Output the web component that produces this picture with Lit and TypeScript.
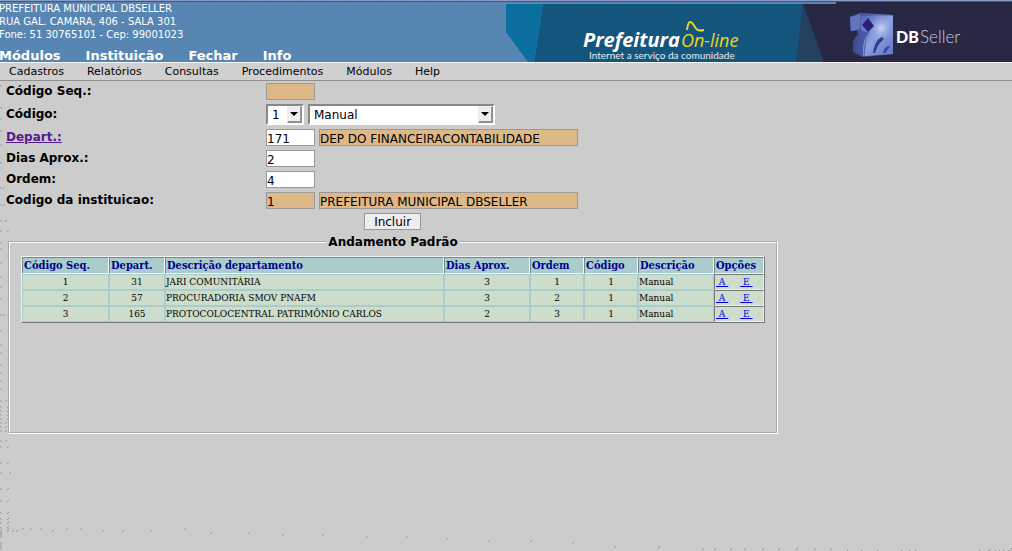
import { LitElement, html, css, svg } from "lit";
import { customElement, state } from "lit/decorators.js";

interface Step {
  seq: number;
  dept: number;
  name: string;
  days: number;
  order: number;
  code: number;
  desc: string;
}

const STEPS: Step[] = [
  { seq: 1, dept: 31, name: "JARI COMUNITÁRIA", days: 3, order: 1, code: 1, desc: "Manual" },
  { seq: 2, dept: 57, name: "PROCURADORIA SMOV PNAFM", days: 3, order: 2, code: 1, desc: "Manual" },
  { seq: 3, dept: 165, name: "PROTOCOLOCENTRAL PATRIMÔNIO CARLOS", days: 2, order: 3, code: 1, desc: "Manual" },
];

@customElement("city-header")
class CityHeader extends LitElement {
  static styles = css`
    :host {
      display: block;
      font-family: "DejaVu Sans", sans-serif;
    }
    .strip {
      height: 1px;
      background: repeating-linear-gradient(90deg, #8d9dcb 0 26px, #8d8d8d 26px 27px);
      border-bottom: 1px solid #47508a;
    }
    .top {
      display: flex;
      height: 60px;
      background: #5786b2;
      color: #fff;
      overflow: hidden;
    }
    .left {
      flex: 1;
      display: flex;
      flex-direction: column;
      justify-content: space-between;
      white-space: nowrap;
    }
    address {
      font-style: normal;
      font-size: 10px;
      line-height: 13px;
      margin-left: -1px;
    }
    .mods {
      display: flex;
      gap: 25px;
      margin-left: -1px;
      font-size: 13px;
      font-weight: bold;
      line-height: 13px;
    }
    a {
      color: inherit;
      text-decoration: none;
    }
    .banner {
      flex: none;
      width: 506px;
      height: 60px;
    }
    .menu {
      display: flex;
      gap: 23px;
      padding: 0 9px;
      border-top: 1px solid #f6f6f6;
      border-bottom: 1px solid #8f8f8f;
      background: #d0d0d0;
      color: #000;
      font-size: 11px;
      line-height: 17px;
    }
    .pf {
      font: italic bold 20px "Open Sans", sans-serif;
      fill: #fff;
    }
    .ol {
      font: italic 18px "Open Sans", sans-serif;
      fill: #ecd51c;
    }
    .tag {
      font: 10px Lato, sans-serif;
      fill: #e6eef4;
    }
    .db {
      font: 900 16px Lato, sans-serif;
      fill: #fff;
    }
    .seller {
      font: 300 17px Lato, sans-serif;
      fill: #c9cbdc;
    }
  `;

  render() {
    return html`
      <header>
        <div class="strip"></div>
        <div class="top">
          <div class="left">
            <address>
              PREFEITURA MUNICIPAL DBSELLER<br />RUA GAL. CAMARA, 406 - SALA 301<br />Fone: 51
              30765101 - Cep: 99001023
            </address>
            <nav class="mods">
              ${["Módulos", "Instituição", "Fechar", "Info"].map((t) => html`<a href="#">${t}</a>`)}
            </nav>
          </div>
          <svg class="banner" viewBox="0 0 506 60" role="img" aria-label="Prefeitura On-line, DBSeller">
            <defs>
              <linearGradient id="cube" x1="0" y1="0" x2="1" y2="1">
                <stop offset="0" stop-color="#4f63b4" />
                <stop offset=".5" stop-color="#8ea2e2" />
                <stop offset="1" stop-color="#5f74c6" />
              </linearGradient>
              <linearGradient id="side" x1="0" x2="1">
                <stop offset="0" stop-color="#35448f" />
                <stop offset="1" stop-color="#7286cf" />
              </linearGradient>
              <radialGradient id="glow">
                <stop offset="0" stop-color="#d3dcf9" stop-opacity=".9" />
                <stop offset="1" stop-color="#93a5e5" stop-opacity="0" />
              </radialGradient>
            </defs>
            <path d="M37 2H506V60H28Z" fill="#14557e" />
            <path d="M0 2H37L28 60H22L0 30Z" fill="#0a6e9f" />
            <path d="M330 0H506V60H290L296 2H330Z" fill="#282845" />
            <path d="M297 2L318 60H290Z" fill="#24425f" />
            <path d="M286 2H297L290 60H280Z" fill="#14557e" />
            <path d="M0 0H330V2H0Z" fill="#5786b2" />
            <g>
              <path d="M344 15L354 11 387 13 387 52 357 55 347 50 347 39 352 32 351 29 344 29Z" fill="url(#side)" />
              <path d="M354 14L387 14V51L359 54C359 44 360 36 364 31L355 28Z" fill="url(#cube)" />
              <ellipse cx="375" cy="26" rx="12" ry="13" fill="url(#glow)" />
              <path d="M344 15L354 12 354 27 345 29Z" fill="#6375bd" />
              <path d="M362 16L368 24 362 30 356 23Z" fill="#2a2278" />
              <path d="M358 54C357 44 358 37 364 31" fill="none" stroke="#8fa1e2" stroke-width="1" />
              <path d="M367 51C368 43 371 37 376 35Q379 36 376 39C372 42 371 46 369 51Z" fill="#2f3f86" />
              <path d="M377 51Q378 45 383 44Q385 45 382 47Q380 49 380 51Z" fill="#3a4a95" />
            </g>
            <text class="pf" x="77" y="45">Prefeitura</text>
            <text class="ol" x="175" y="45">On-line</text>
            <path
              d="M181 28C182 20 184 18 187 22S190 30 198 28"
              fill="none"
              stroke="#ecd51c"
              stroke-width="2"
            />
            <text class="tag" x="83" y="57">Internet a serviço da comunidade</text>
            <text class="db" x="390" y="41">DB</text>
            <text class="seller" x="414" y="41">Seller</text>
          </svg>
        </div>
        <nav class="menu">
          ${["Cadastros", "Relatórios", "Consultas", "Procedimentos", "Módulos", "Help"].map(
            (t) => html`<a href="#">${t}</a>`
          )}
        </nav>
      </header>
    `;
  }
}

@customElement("steps-table")
class StepsTable extends LitElement {
  static styles = css`
    :host {
      display: block;
    }
    table {
      width: 100%;
      table-layout: fixed;
      border-collapse: separate;
      border-spacing: 0;
      border: 1px solid;
      border-color: #f2f2f2 #777 #777 #f2f2f2;
      background: #aacccc;
      font-family: "DejaVu Serif Condensed", "DejaVu Serif", serif;
      font-size: 10px;
      line-height: 14px;
      color: #000;
    }
    th {
      padding: 1px 1px 0;
      border: 1px solid;
      border-color: #6f8888 #eef6f6 #eef6f6 #6f8888;
      color: #00008b;
      font-size: 11px;
      text-align: left;
      white-space: nowrap;
    }
    td {
      padding: 0;
      border: 1px solid #aacccc;
      background: #ccddcc;
      text-align: center;
      white-space: nowrap;
    }
    .text {
      text-align: left;
    }
    .ops {
      padding: 0 1px;
      border-color: #777 #eee #eee #777;
      text-align: left;
    }
    .c1 { width: 87px; }
    .c2 { width: 56px; }
    .c3 { width: 279px; }
    .c4 { width: 86px; }
    .c5 { width: 54px; }
    .c6 { width: 54px; }
    .c7 { width: 76px; }
    .c8 { width: 50px; }
    a {
      margin-right: 12px;
      color: #00e;
      text-decoration: underline;
    }
    a:last-child {
      margin-right: 0;
    }
  `;

  render() {
    const heads = ["Código Seq.", "Depart.", "Descrição departamento", "Dias Aprox.", "Ordem", "Código", "Descrição", "Opções"];
    return html`
      <table>
        <colgroup>
          ${heads.map((_, i) => html`<col class="c${i + 1}" />`)}
        </colgroup>
        <thead>
          <tr>
            ${heads.map((h) => html`<th scope="col">${h}</th>`)}
          </tr>
        </thead>
        <tbody>
          ${STEPS.map(
            (s) => html`<tr>
              <td>${s.seq}</td>
              <td>${s.dept}</td>
              <td class="text">${s.name}</td>
              <td>${s.days}</td>
              <td>${s.order}</td>
              <td>${s.code}</td>
              <td class="text">${s.desc}</td>
              <td class="ops"><a href="#">&nbsp;A&nbsp;</a><a href="#">&nbsp;E&nbsp;</a></td>
            </tr>`
          )}
        </tbody>
      </table>
    `;
  }
}

// Stray speckles along the frame edges: [x, y] pairs, one small diagonal tick each.
const EDGE_TICKS: number[][] = [
  [0, 400], [5, 400], [0, 406], [7, 406], [0, 410], [7, 410], [0, 414], [7, 414], [0, 418], [7, 418],
  [0, 422], [5, 422], [0, 426], [5, 426], [0, 430], [5, 430], [0, 440], [5, 440], [0, 446], [7, 446],
  [0, 462], [7, 462], [0, 472], [9, 472], [0, 488], [7, 488], [0, 500], [7, 500], [0, 512], [7, 512],
  [0, 518], [7, 518], [0, 522], [7, 522], [0, 527], [7, 526], [7, 528], [7, 530],
  [0, 530], [0, 532], [0, 534], [0, 536], [0, 542], [0, 544], [0, 546], [0, 548],
  [0, 85], [0, 107], [0, 118], [0, 130], [0, 144], [0, 162], [3, 187], [0, 187], [3, 204], [0, 204], [0, 220], [5, 220],
  [0, 230], [7, 230], [0, 242], [0, 248], [0, 262], [0, 276], [0, 286], [0, 298], [3, 314], [0, 314],
  [0, 330], [0, 344], [0, 352], [0, 364], [0, 372], [0, 380], [0, 388],
  [12, 530], [16, 530], [22, 528], [30, 528], [40, 528], [52, 530], [66, 528], [80, 528], [102, 530], [122, 530],
  [150, 530], [184, 528], [210, 532], [248, 532], [282, 534], [322, 534], [366, 536], [406, 536], [446, 538],
  [488, 540], [530, 540], [572, 542], [614, 546], [658, 546], [702, 548], [714, 548], [730, 548], [744, 548],
  [762, 548], [778, 548], [796, 548], [814, 548], [830, 548], [846, 550], [860, 550], [876, 550], [900, 550],
  [908, 550], [914, 550], [978, 550], [987, 550], [989, 549], [994, 550], [998, 550], [1002, 550], [1007, 550], [1010, 548],
];

@customElement("app-root")
class AppRoot extends LitElement {
  static styles = css`
    :host {
      display: block;
      position: relative;
      min-height: 100vh;
      overflow: hidden;
      background: #ccc;
      color: #000;
      font-family: "DejaVu Sans", sans-serif;
      font-size: 12px;
    }
    .ticks {
      position: absolute;
      top: 0;
      left: 0;
      width: 100%;
      height: 100%;
      pointer-events: none;
    }
    .form {
      display: grid;
      grid-template-columns: 260px 1fr;
      row-gap: 4px;
      align-items: center;
      padding: 2px 6px 0;
    }
    .label {
      font-weight: bold;
      font-size: 12px;
      line-height: 17px;
    }
    .link {
      color: #551a8b;
    }
    .fields {
      display: flex;
      gap: 4px;
    }
    input {
      box-sizing: border-box;
      width: 49px;
      height: 17px;
      margin: 0;
      padding: 2px 0 0;
      border: 1px solid #999;
      border-radius: 0;
      background: #fff;
      color: #000;
      font: 12px/13px "DejaVu Sans", sans-serif;
      outline: none;
    }
    .wide {
      width: 259px;
    }
    .ro {
      background: #deb887;
    }
    .drop {
      display: grid;
      width: 187px;
      height: 21px;
    }
    .short {
      width: 38px;
    }
    select {
      grid-area: 1 / 1;
      appearance: none;
      width: 100%;
      height: 21px;
      margin: 0;
      padding: 0 18px 0 4px;
      border: 2px solid;
      border-color: #888 #fff #fff #888;
      border-radius: 0;
      background: #fff;
      color: #000;
      font: 12px "DejaVu Sans", sans-serif;
      outline: none;
    }
    .arrow {
      grid-area: 1 / 1;
      justify-self: end;
      align-self: center;
      box-sizing: border-box;
      width: 15px;
      height: 17px;
      margin-right: 2px;
      border: 1px solid;
      border-color: #eceef2 #888 #888 #eceef2;
      box-shadow: inset -1px -1px #999;
      background: #eceef2;
      pointer-events: none;
    }
    .actions {
      display: flex;
      justify-content: center;
      width: 77%;
      margin: 4px 0 0;
      padding-left: 3px;
    }
    button {
      height: 17px;
      width: 57px;
      padding: 2px 0 0;
      border: 1px solid #999;
      border-radius: 0;
      background: #eceef2;
      color: #000;
      font: 12px/13px "DejaVu Sans", sans-serif;
    }
    fieldset {
      box-sizing: border-box;
      width: 76%;
      min-height: 199px;
      margin: 5px 0 0 8px;
      padding: 7px 11px 0;
      border: 2px groove #fff;
    }
    legend {
      margin: 0 auto;
      padding: 0 2px;
      font-size: 12px;
      line-height: 14px;
      font-weight: bold;
    }
  `;

  @state() private code = "1";

  private pick(e: Event) {
    this.code = (e.target as HTMLSelectElement).value;
  }

  private arrow() {
    return html`<svg class="arrow" viewBox="0 0 13 15" aria-hidden="true">
      ${svg`<path d="M2 5H10L6 9Z" fill="#000"/>`}
    </svg>`;
  }

  render() {
    return html`
      <city-header></city-header>
      <form @submit=${(e: Event) => e.preventDefault()}>
        <div class="form">
          <label class="label" for="seq">Código Seq.:</label>
          <div class="fields"><input id="seq" class="ro" readonly /></div>

          <label class="label" for="code">Código:</label>
          <div class="fields">
            <div class="drop short">
              <select id="code" .value=${this.code} @change=${this.pick}>
                <option value="1">1</option>
              </select>
              ${this.arrow()}
            </div>
            <div class="drop">
              <select aria-label="Código" .value=${this.code} @change=${this.pick}>
                <option value="1">Manual</option>
              </select>
              ${this.arrow()}
            </div>
          </div>

          <label class="label" for="dept"><a class="link" href="#">Depart.:</a></label>
          <div class="fields">
            <input id="dept" value="171" />
            <input class="ro wide" aria-label="Depart." readonly value="DEP DO FINANCEIRACONTABILIDADE" />
          </div>

          <label class="label" for="days">Dias Aprox.:</label>
          <div class="fields"><input id="days" value="2" /></div>

          <label class="label" for="order">Ordem:</label>
          <div class="fields"><input id="order" value="4" /></div>

          <label class="label" for="inst">Codigo da instituicao:</label>
          <div class="fields">
            <input id="inst" class="ro" readonly value="1" />
            <input class="ro wide" aria-label="Instituicao" readonly value="PREFEITURA MUNICIPAL DBSELLER" />
          </div>
        </div>
        <div class="actions"><button type="submit">Incluir</button></div>
      </form>
      <fieldset>
        <legend>Andamento Padrão</legend>
        <steps-table></steps-table>
      </fieldset>
      <svg class="ticks" aria-hidden="true">
        ${EDGE_TICKS.map(([x, y]) =>
          x === 0
            ? svg`<path d="M0 ${y}l2 2" stroke="#999" stroke-width="1"/>`
            : svg`<path d="M${x} ${y + 2}l2 -2" stroke="#999" stroke-width="1"/>`
        )}
      </svg>
    `;
  }
}
